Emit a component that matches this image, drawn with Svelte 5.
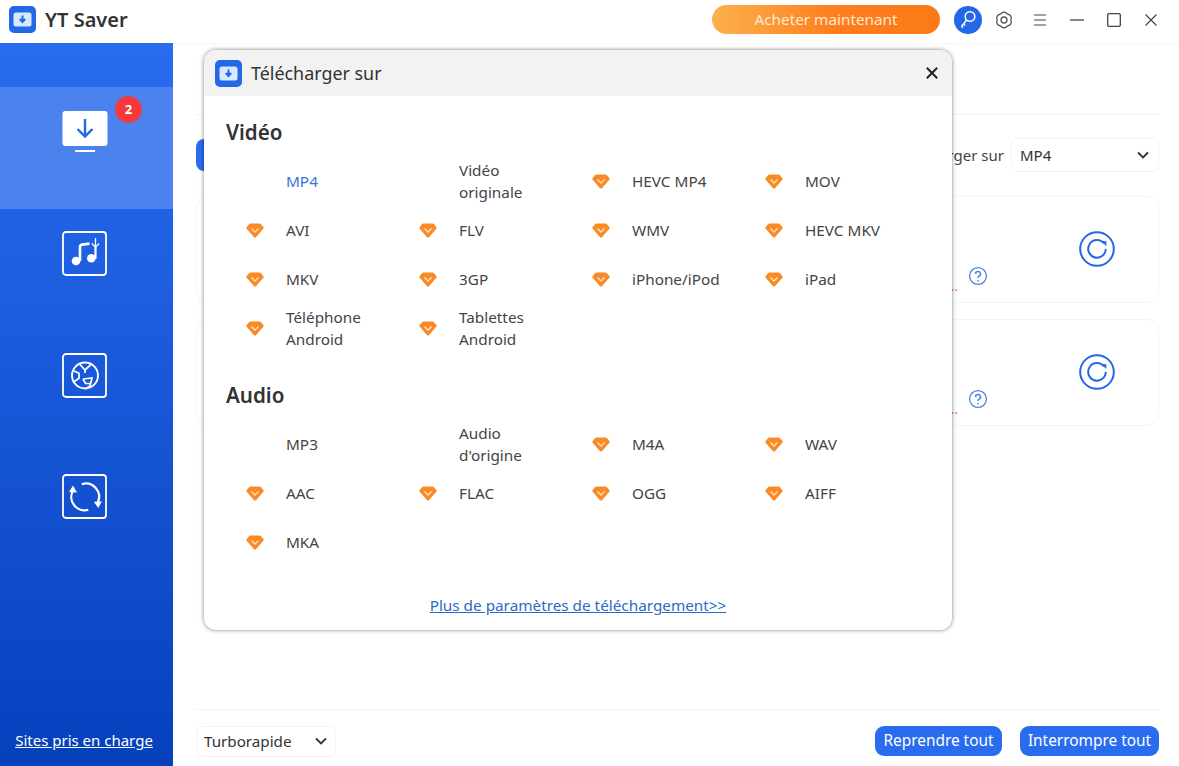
<script>
  const video = [
    { n: 'MP4', free: true, active: true }, { n: 'Vidéo originale', free: true },
    { n: 'HEVC MP4' }, { n: 'MOV' }, { n: 'AVI' }, { n: 'FLV' }, { n: 'WMV' }, { n: 'HEVC MKV' },
    { n: 'MKV' }, { n: '3GP' }, { n: 'iPhone/iPod' }, { n: 'iPad' },
    { n: 'Téléphone Android' }, { n: 'Tablettes Android' }
  ];
  const audio = [
    { n: 'MP3', free: true }, { n: "Audio d'origine", free: true }, { n: 'M4A' }, { n: 'WAV' },
    { n: 'AAC' }, { n: 'FLAC' }, { n: 'OGG' }, { n: 'AIFF' }, { n: 'MKA' }
  ];
  const sections = [{ title: 'Vidéo', items: video }, { title: 'Audio', items: audio }];
</script>

<div class="app">
  <header class="top">
    <div class="brand">
      <svg class="logo" viewBox="0 0 27 27" width="27" height="27">
        <rect width="27" height="27" rx="5" fill="#2368e6" />
        <rect x="4.5" y="6.5" width="18" height="14" rx="2.5" fill="#dbe8fb" />
        <path d="M13.5 9.5v6M10.8 13l2.7 3 2.7-3" fill="none" stroke="#2368e6" stroke-width="2" />
      </svg>
      <span class="brand-name">YT Saver</span>
    </div>
    <div class="top-right">
      <div class="buy">Acheter maintenant</div>
      <div class="key">
        <svg viewBox="0 0 28 28" width="28" height="28" fill="none" stroke="#fff" stroke-width="1.5">
          <circle cx="16" cy="10.5" r="4.8" />
          <path d="M12.6 14 7.5 20.500M9.500 18l1.800 1.500M7.500 20.500l1.500 1.300" />
        </svg>
      </div>
      <svg class="tool gear" viewBox="0 0 18 18" width="18" height="18" fill="none" stroke="#555" stroke-width="1.300">
        <path d="M15.800 9A4 4 0 0 1 12.400 14.900 4 4 0 0 1 5.600 14.900 4 4 0 0 1 2.200 9 4 4 0 0 1 5.600 3.100 4 4 0 0 1 12.400 3.100 4 4 0 0 1 15.800 9z" />
        <circle cx="9" cy="9" r="3" />
      </svg>
      <svg class="tool menu" viewBox="0 0 12 12" width="12" height="12" stroke="#444" stroke-width="1.200">
        <path d="M0 1h12M0 6h12M0 11h12" />
      </svg>
      <svg class="tool min" viewBox="0 0 14 14" width="14" height="14" stroke="#444" stroke-width="1.300">
        <path d="M0 7h14" />
      </svg>
      <svg class="tool max" viewBox="0 0 14 14" width="14" height="14" fill="none" stroke="#444" stroke-width="1.300">
        <rect x=".7" y=".7" width="12.600" height="12.600" rx="1" />
      </svg>
      <svg class="tool cls" viewBox="0 0 12 12" width="12" height="12" stroke="#444" stroke-width="1.200">
        <path d="M.5.500l11 11M11.500.500l-11 11" />
      </svg>
    </div>
  </header>

  <div class="body">
    <aside class="side">
      <div class="nav-top"></div>
      <div class="nav-item active">
        <svg viewBox="0 0 46 42" width="46" height="42">
          <rect x=".5" y="0" width="45" height="35" rx="3" fill="#fff" />
          <rect x="13" y="39" width="20" height="2" fill="#fff" />
          <path d="M23 8v17M15.500 18l7.500 7.500 7.500-7.500" fill="none" stroke="#2368e6" stroke-width="2.400" />
        </svg>
        <span class="badge">2</span>
      </div>
      <div class="nav-item">
        <svg viewBox="0 0 46 46" width="46" height="46" fill="none" stroke="#fff">
          <rect x="1" y="1" width="43" height="43" rx="3" stroke-width="1.800" />
          <path d="M18 30V16q0-2 2-2.400l7.500-1" stroke-width="2.600" />
          <path d="M33.500 16v12" stroke-width="2.200" />
          <circle cx="14" cy="30" r="4.300" fill="#fff" stroke="none" />
          <circle cx="29.300" cy="27.300" r="4.300" fill="#fff" stroke="none" />
          <path d="M33.500 7v9M29.800 12.500l3.700 3.700 3.700-3.700" stroke-width="1.300" />
        </svg>
      </div>
      <div class="nav-item">
        <svg viewBox="0 0 46 46" width="46" height="46" fill="none" stroke="#fff">
          <rect x="1" y="1" width="43" height="43" rx="3" stroke-width="1.800" />
          <circle cx="23" cy="22.500" r="13" stroke-width="1.900" />
          <path d="M18 11.500l5 5.500 5.500-5M23 17v3M12 18l5 2.300v5l-5 3.500" stroke-width="1.700" />
          <path d="M21 26l9-1-2 8-4 2.500M21 26l2.500 4.500 4.500 0" stroke-width="1.700" />
        </svg>
      </div>
      <div class="nav-item">
        <svg viewBox="0 0 46 46" width="46" height="46" fill="none" stroke="#fff">
          <rect x="1" y="1" width="43" height="43" rx="3" stroke-width="1.800" />
          <path d="M19.700 10.200A13.300 13.300 0 0 1 35.800 28.500" stroke-width="2.200" />
          <path d="M26.300 35.800A13.300 13.300 0 0 1 11 16.500" stroke-width="2.200" />
          <path d="M31.800 27.800l8-.3-3.500 6.500zM7 18l8 .5L11 11.500z" fill="#fff" stroke="none" />
        </svg>
      </div>
      <span class="sites">Sites pris en charge</span>
    </aside>

    <main class="main">
      <div class="tabs"></div>
      <div class="toolbar">
        <span class="tb-btn"></span>
        <div class="tb-right">
          <span class="tb-label">Télécharger sur</span>
          <div class="select mp4">
            <span>MP4</span>
            <svg viewBox="0 0 12 8" width="12" height="8" fill="none" stroke="#333" stroke-width="1.800"><path d="M1 1.500l5 5 5-5" /></svg>
          </div>
        </div>
      </div>
      <div class="cards">
        {#each [0, 1] as c (c)}
          <div class="card">
            <div class="help">
              <span class="dots">…</span>
              <svg viewBox="0 0 20 20" width="20" height="20" fill="none" stroke="#4a82d8" stroke-width="1.300">
                <circle cx="10" cy="10" r="8.400" />
                <path d="M7.500 8a2.500 2.500 0 1 1 3.600 2.200c-.8.400-1.100.9-1.100 1.800" stroke-width="1.500" />
                <circle cx="10" cy="14.600" r=".9" fill="#4a82d8" stroke="none" />
              </svg>
            </div>
            <svg class="retry" viewBox="0 0 36 36" width="36" height="36" fill="none" stroke="#2368e6" stroke-width="2">
              <circle cx="18" cy="18" r="16.800" />
              <path d="M25 12.500A8.800 8.800 0 1 0 26.800 18" />
              <path d="M22.500 10l5 .2-.3 5z" fill="#2368e6" stroke="none" />
            </svg>
          </div>
        {/each}
      </div>
      <footer class="foot">
        <div class="select speed">
          <span>Turborapide</span>
          <svg viewBox="0 0 12 8" width="12" height="8" fill="none" stroke="#333" stroke-width="1.800"><path d="M1 1.500l5 5 5-5" /></svg>
        </div>
        <div class="actions">
          <span class="btn resume">Reprendre tout</span>
          <span class="btn">Interrompre tout</span>
        </div>
      </footer>
    </main>
  </div>

  <div class="modal">
    <div class="m-head">
      <svg viewBox="0 0 27 27" width="27" height="27">
        <rect width="27" height="27" rx="5" fill="#2368e6" />
        <rect x="4.500" y="6.500" width="18" height="14" rx="2.500" fill="#dbe8fb" />
        <path d="M13.500 9.500v6M10.800 13l2.700 3 2.700-3" fill="none" stroke="#2368e6" stroke-width="2" />
      </svg>
      <span class="m-title">Télécharger sur</span>
      <svg class="m-close" viewBox="0 0 12 12" width="12" height="12" stroke="#222" stroke-width="2">
        <path d="M.8.800l10.400 10.400M11.200.800.800 11.200" />
      </svg>
    </div>
    <div class="m-body">
      {#each sections as s (s.title)}
        <h3>{s.title}</h3>
        <div class="grid">
          {#each s.items as f (f.n)}
            <div class="fmt" class:active={f.active}>
              <span class="gem">
                {#if !f.free}
                  <svg viewBox="0 0 18 15" width="18" height="15">
                    <path d="M4.500.500h9q.8 0 1.300.6l2.700 3.200q.5.700 0 1.300l-7.300 8.400q-1.200 1.200-2.400 0L.5 5.600q-.5-.6 0-1.300L3.200 1.100Q3.700.500 4.500.500z" fill="#f98a25" />
                    <path d="M5.500 5.500 9 9l3.500-3.500" fill="none" stroke="#ffe3c4" stroke-width="1.400" />
                  </svg>
                {/if}
              </span>
              <span class="fname">{f.n}</span>
            </div>
          {/each}
        </div>
      {/each}
      <div class="more"><span>Plus de paramètres de téléchargement&gt;&gt;</span></div>
    </div>
  </div>
</div>

<style>
  :global(body) {
    margin: 0;
    background: #fff;
  }
  .app {
    position: relative;
    width: 1179px;
    height: 766px;
    overflow: hidden;
    font-family: "Noto Sans", "Open Sans", sans-serif;
    color: #333;
    display: flex;
    flex-direction: column;
  }
  .top {
    height: 43px;
    flex: none;
    display: flex;
    align-items: center;
    justify-content: space-between;
    padding: 0 22px 4px 9px;
    box-sizing: border-box;
  }
  .brand {
    display: flex;
    align-items: center;
    gap: 9px;
  }
  .brand-name {
    font-size: 20px;
    font-weight: 600;
    color: #333;
  }
  .top-right {
    display: flex;
    align-items: center;
  }
  .buy {
    width: 228px;
    height: 29px;
    border-radius: 15px;
    background: linear-gradient(90deg, #fdb14f, #ff7d1c 55%, #fb7a18);
    color: #ffe9d2;
    font-size: 15.300px;
    line-height: 29px;
    text-align: center;
  }
  .key {
    width: 28px;
    height: 28px;
    border-radius: 50%;
    background: #2368e6;
    margin-left: 14px;
    display: flex;
  }
  .tool {
    flex: none;
  }
  .gear { margin-left: 13px; }
  .menu { margin-left: 21px; }
  .min { margin-left: 24px; }
  .max { margin-left: 23px; }
  .cls { margin-left: 24px; }

  .body {
    flex: 1;
    display: flex;
    min-height: 0;
    box-shadow: inset 0 1px 0 #f6f6f6;
  }
  .side {
    width: 173px;
    flex: none;
    background: linear-gradient(180deg, #2a6cf0, #0541bd);
    display: flex;
    flex-direction: column;
    align-items: center;
    position: relative;
  }
  .nav-top {
    height: 44px;
    flex: none;
  }
  .nav-item {
    position: relative;
    width: 100%;
    display: flex;
    justify-content: center;
    padding: 22px 4px 0 0;
    height: 121.500px;
    box-sizing: border-box;
  }
  .nav-item.active {
    background: #4b82ee;
    height: 122px;
    padding-top: 24px;
  }
  .badge {
    position: absolute;
    left: 115px;
    top: 9px;
    width: 27px;
    height: 27px;
    border-radius: 50%;
    background: #f53a3e;
    color: #fff;
    font-size: 13px;
    font-weight: 700;
    line-height: 27px;
    text-align: center;
  }
  .sites {
    margin-top: auto;
    margin-bottom: 16px;
    padding-right: 5px;
    color: #fff;
    font-size: 15px;
    text-decoration: underline;
  }

  .main {
    flex: 1;
    display: flex;
    flex-direction: column;
    padding: 0 20px 0 23px;
    min-width: 0;
  }
  .tabs {
    height: 71px;
    flex: none;
    border-bottom: 1px solid #f3f3f3;
  }
  .toolbar {
    display: flex;
    align-items: center;
    justify-content: space-between;
    margin-top: 23px;
    height: 34px;
  }
  .tb-btn {
    width: 30px;
    height: 32px;
    border-radius: 8px;
    background: #2a6cf0;
  }
  .tb-right {
    display: flex;
    align-items: center;
    gap: 7px;
  }
  .tb-label {
    font-size: 15px;
    color: #444;
  }
  .select {
    display: flex;
    align-items: center;
    justify-content: space-between;
    border: 1px solid #f3f3f3;
    border-radius: 7px;
    box-sizing: border-box;
    font-size: 15px;
    color: #333;
  }
  .mp4 {
    width: 148px;
    height: 34px;
    padding: 0 9px 0 8px;
  }
  .cards {
    margin-top: 24px;
    display: flex;
    flex-direction: column;
    gap: 16px;
  }
  .card {
    height: 107px;
    border: 1px solid #f5f5f5;
    border-radius: 12px;
    box-sizing: border-box;
    display: flex;
    align-items: center;
    justify-content: flex-end;
    padding-right: 43px;
    position: relative;
  }
  .help {
    position: absolute;
    left: 748px;
    top: 69px;
    display: flex;
    align-items: center;
  }
  .dots {
    position: absolute;
    left: 2px;
    top: 10px;
    font-size: 14px;
    line-height: 19px;
    color: #f08a30;
  }
  .help svg {
    margin-left: 23px;
  }
  .retry {
    margin-bottom: 1px;
  }
  .foot {
    margin-top: auto;
    height: 57px;
    flex: none;
    border-top: 1px solid #f3f3f3;
    box-sizing: border-box;
    display: flex;
    justify-content: space-between;
    padding-top: 16px;
  }
  .speed {
    width: 140px;
    height: 31px;
    padding: 0 8px 2px 7px;
    font-size: 15.200px;
  }
  .actions {
    display: flex;
    gap: 18px;
  }
  .btn {
    width: 139px;
    box-sizing: border-box;
    height: 30px;
    background: #2a6cf0;
    border-radius: 9px;
    color: #fff;
    font-size: 15.400px;
    line-height: 29px;
    text-align: center;
  }
  .btn.resume {
    width: 127px;
  }

  .modal {
    position: absolute;
    left: 204px;
    top: 50px;
    width: 748px;
    height: 580px;
    background: #fff;
    border-radius: 12px;
    box-shadow: 0 0 4px rgba(0, 0, 0, 0.5);
    overflow: hidden;
    display: flex;
    flex-direction: column;
  }
  .m-head {
    height: 46px;
    flex: none;
    background: #f2f2f2;
    display: flex;
    align-items: center;
    padding: 0 14px 0 11px;
    gap: 9px;
  }
  .m-title {
    font-size: 17.900px;
    color: #333;
  }
  .m-close {
    margin-left: auto;
  }
  .m-body {
    flex: 1;
    display: flex;
    flex-direction: column;
    padding: 0 22px;
  }
  h3 {
    margin: 0;
    font-size: 20.600px;
    font-weight: 600;
    color: #333;
    line-height: 27px;
    padding-top: 23px;
  }
  h3 ~ h3 {
    padding-top: 30px;
  }
  .grid {
    display: grid;
    grid-template-columns: repeat(4, 173px);
    grid-auto-rows: 49px;
    margin-top: 10px;
  }
  .fmt {
    display: flex;
    align-items: center;
    font-size: 15.300px;
    line-height: 22px;
    color: #444;
  }
  .fmt.active {
    color: #3b72d8;
  }
  .gem {
    width: 60px;
    flex: none;
    display: flex;
    padding: 1px 0 0 20px;
    box-sizing: border-box;
  }
  .fname {
    max-width: 90px;
  }
  .more {
    margin-top: auto;
    margin-bottom: 15px;
    text-align: center;
    color: #2a6bc4;
    font-size: 15.300px;
    text-decoration: underline;
  }
</style>
